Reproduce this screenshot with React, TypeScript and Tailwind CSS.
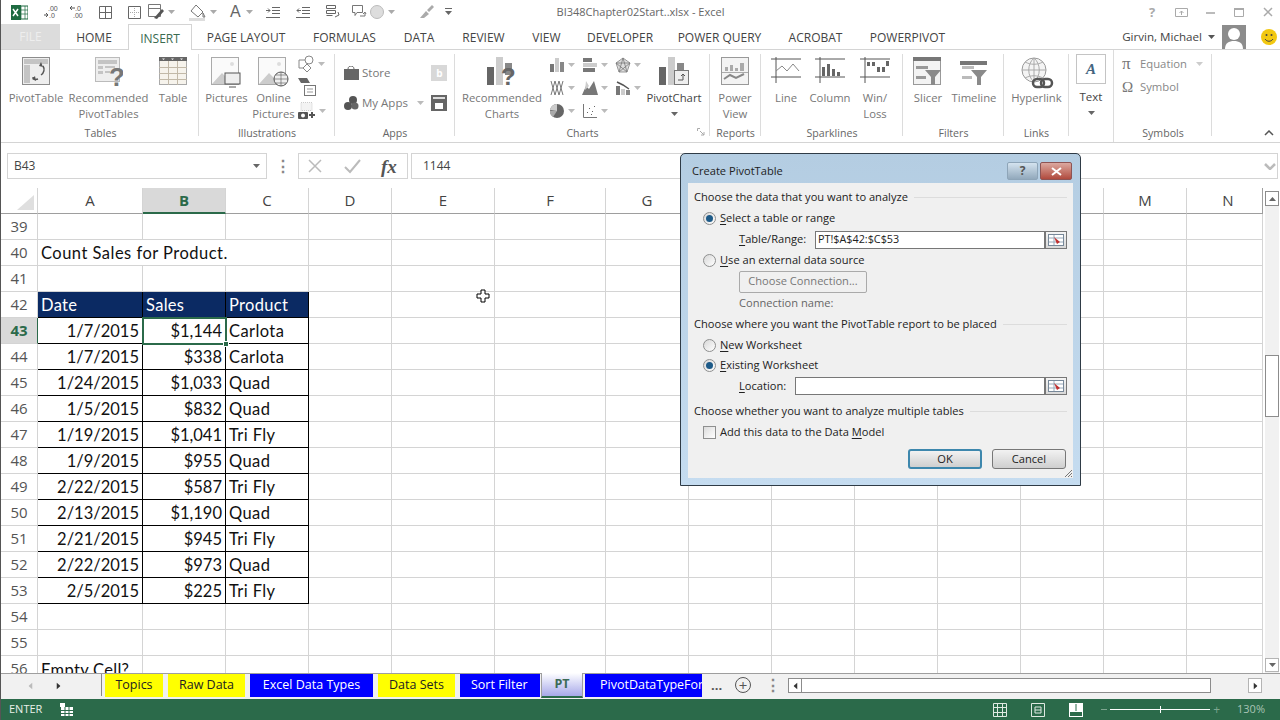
import type { ReactNode } from "react";

const UI = "font-['Open_Sans',sans-serif]";

const CELLS: [number, string, string, string][] = [
  [43, "1/7/2015", "$1,144", "Carlota"],
  [44, "1/7/2015", "$338", "Carlota"],
  [45, "1/24/2015", "$1,033", "Quad"],
  [46, "1/5/2015", "$832", "Quad"],
  [47, "1/19/2015", "$1,041", "Tri Fly"],
  [48, "1/9/2015", "$955", "Quad"],
  [49, "2/22/2015", "$587", "Tri Fly"],
  [50, "2/13/2015", "$1,190", "Quad"],
  [51, "2/21/2015", "$945", "Tri Fly"],
  [52, "2/22/2015", "$973", "Quad"],
  [53, "2/5/2015", "$225", "Tri Fly"],
];

const COLUMNS = [
  { name: "A", w: "w-[105px]" },
  { name: "B", w: "w-[83px]" },
  { name: "C", w: "w-[83px]" },
  { name: "D", w: "w-[83px]" },
  { name: "E", w: "w-[103px]" },
  { name: "F", w: "w-[111px]" },
  { name: "G", w: "w-[83px]" },
  { name: "H", w: "w-[83px]" },
  { name: "I", w: "w-[83px]" },
  { name: "J", w: "w-[83px]" },
  { name: "K", w: "w-[83px]" },
  { name: "L", w: "w-[83px]" },
  { name: "M", w: "w-[83px]" },
  { name: "N", w: "w-[76px] pl-[7px]" },
];

const TABS = [
  { label: "HOME", w: "w-[68px]" },
  { label: "INSERT", w: "w-[64px]", active: true },
  { label: "PAGE LAYOUT", w: "w-[108px]" },
  { label: "FORMULAS", w: "w-[89px]" },
  { label: "DATA", w: "w-[60px]" },
  { label: "REVIEW", w: "w-[69px]" },
  { label: "VIEW", w: "w-[57px]" },
  { label: "DEVELOPER", w: "w-[90px]" },
  { label: "POWER QUERY", w: "w-[109px]" },
  { label: "ACROBAT", w: "w-[83px]" },
  { label: "POWERPIVOT", w: "w-[101px]" },
];

const SHEETS = [
  { label: "Topics", w: "w-[58px]", c: "bg-[#ffff00] text-[#222] justify-center" },
  { label: "Raw Data", w: "w-[77px]", c: "bg-[#ffff00] text-[#222] justify-center" },
  { label: "Excel Data Types", w: "w-[123px]", c: "bg-[#0000ff] text-white justify-center" },
  { label: "Data Sets", w: "w-[77px]", c: "bg-[#ffff00] text-[#222] justify-center" },
  { label: "Sort Filter", w: "w-[80px]", c: "bg-[#0000ff] text-white pl-[11px]" },
];

function Caret({ className = "" }: { className?: string }) {
  return (
    <svg width="7" height="4" viewBox="0 0 7 4" className={className}>
      <path d="M0 0h7L3.5 4z" fill="currentColor" />
    </svg>
  );
}

function Large({ w, icon, lines, dark }: { w: string; icon: ReactNode; lines: string[]; dark?: boolean }) {
  return (
    <div className={`${w} flex shrink-0 flex-col items-center pt-[7px]`}>
      <div className="flex h-[33px] items-start justify-center">{icon}</div>
      <div className={`text-center text-[11.3px] leading-[16px] whitespace-nowrap ${dark ? "text-[#444]" : "text-[#777]"}`}>
        {lines.map((l) => (
          <div key={l}>{l}</div>
        ))}
      </div>
    </div>
  );
}

function Group({ w, label, children, noLine }: { w: string; label?: string; children: ReactNode; noLine?: boolean }) {
  return (
    <div className={`${w} relative flex h-full shrink-0 flex-col`}>
      <div className="flex h-[75px] items-start">{children}</div>
      <div className="text-center text-[10.6px] leading-[16px] text-[#666]">{label}</div>
      {!noLine && <div className="absolute top-[4px] right-0 bottom-[6px] w-px bg-[#dcdcdc]" />}
    </div>
  );
}

/* ribbon icons, all greyed out because the dialog is open */
function PivotIcon() {
  return (
    <svg width="28" height="28" viewBox="0 0 28 28">
      <rect x=".5" y=".5" width="27" height="27" fill="#eee" stroke="#8c8c8c" />
      <path d="M2 2h24v5H2zM2 8h6v18H2z" fill="#c4c4c4" />
      <path d="M11 20c0 2 2 3 5 2M21 9c2 3 1 7-2 9" fill="none" stroke="#555" strokeWidth="1.5" />
      <path d="M19 5l-2 4 4 1zM13 19l-3 3 4 2z" fill="#555" />
    </svg>
  );
}
function RecPivotIcon() {
  return (
    <svg width="28" height="30" viewBox="0 0 28 30">
      <rect x=".5" y=".5" width="24" height="24" fill="#eee" stroke="#bbb" />
      <path d="M3 3h19v4H3zM3 9h5v3H3zM3 14h5v3H3zM10 9h10v2H10zM10 14h5v2H10z" fill="#c4c4c4" />
      <text x="14" y="29" fontSize="26" fontWeight="700" fill="#777" fontFamily="Liberation Sans">?</text>
    </svg>
  );
}
function TableIcon() {
  return (
    <svg width="28" height="28" viewBox="0 0 28 28">
      <rect x=".5" y=".5" width="27" height="27" fill="#f6f3ec" stroke="#aaa" />
      <rect width="28" height="4" fill="#666" />
      <path d="M9.5 4v24M18.5 4v24M0 10.5h28M0 16.5h28M0 22.5h28" stroke="#c2b9a8" fill="none" />
      <path d="M3 1.5h3L4.500 3zM12 1.500h3L13.500 3zM21 1.500h3L22.500 3z" fill="#eee" />
    </svg>
  );
}
function PictureBase({ children }: { children: ReactNode }) {
  return (
    <svg width="31" height="31" viewBox="0 0 31 31">
      <rect x=".5" y=".5" width="27" height="27" fill="#fafafa" stroke="#aaa" />
      <path d="M1 27l10-11 6 6 3-2 7 7z" fill="#ccc" />
      <circle cx="21" cy="7" r="2" fill="#ddd" />
      {children}
    </svg>
  );
}
function LineChartSpark({ children }: { children: ReactNode }) {
  return (
    <svg width="30" height="28" viewBox="0 0 30 28">
      <path d="M0 2h30M0 20h30M5 0v26" stroke="#555" fill="none" />
      {children}
    </svg>
  );
}
function BarsIcon({ question, pivot }: { question?: boolean; pivot?: boolean }) {
  return (
    <svg width="30" height="30" viewBox="0 0 30 30">
      <rect x="0" y="10" width="7" height="18" fill="#666" />
      <rect x="9" y="0" width="7" height="28" fill="#ccc" />
      <rect x="18" y="6" width="7" height="12" fill="#888" />
      {question && <text x="14" y="28" fontSize="24" fontWeight="700" fill="#666" fontFamily="Liberation Sans">?</text>}
      {pivot && (
        <>
          <rect x="15.500" y="13.500" width="14" height="14" fill="#eee" stroke="#777" />
          <path d="M19 23h5v-5m-2 1l2-2 2 2" fill="none" stroke="#555" />
        </>
      )}
    </svg>
  );
}
function FunnelIcon({ framed }: { framed?: boolean }) {
  return (
    <svg width="30" height="28" viewBox="0 0 30 28">
      {framed && <rect x=".5" y=".5" width="27" height="27" fill="#f3f3f3" stroke="#999" />}
      <rect x={framed ? 0 : 1} y={framed ? 0 : 4} width={framed ? 28 : 27} height="4" fill="#777" />
      <path d="M3 9h12v3H3zM3 19h10v3H3z" fill={framed ? "#999" : "#bbb"} />
      <path d="M12 13h16l-6 7v8h-4v-8z" fill="#8a8a8a" />
    </svg>
  );
}
function SmallChart({ children }: { children: ReactNode }) {
  return (
    <div className="flex h-[23px] w-[33px] items-center gap-[3px] text-[#bbb]">
      <svg width="16" height="16" viewBox="0 0 16 16">{children}</svg>
      <Caret />
    </div>
  );
}

function Ribbon() {
  return (
    <div className="flex h-[93px] shrink-0 border-b border-[#d4d4d4] bg-white pl-px">
      <Group w="w-[197px]" label="Tables">
        <Large w="w-[68px]" icon={<PivotIcon />} lines={["PivotTable"]} />
        <Large w="w-[77px]" icon={<RecPivotIcon />} lines={["Recommended", "PivotTables"]} />
        <Large w="w-[52px]" icon={<TableIcon />} lines={["Table"]} />
      </Group>
      <Group w="w-[136px]" label="Illustrations">
        <Large w="w-[55px]" icon={<PictureBase><rect x="14" y="16" width="15" height="11" fill="#eee" stroke="#555" /><path d="M18 30h7" stroke="#555" /></PictureBase>} lines={["Pictures"]} />
        <Large w="w-[39px]" icon={<PictureBase><circle cx="23" cy="22" r="7" fill="#eee" stroke="#555" /><path d="M16 22h14M23 15v14M18 18h10M18 26h10" stroke="#555" fill="none" strokeWidth=".6" /></PictureBase>} lines={["Online", "Pictures"]} />
        <div className="ml-[5px] flex flex-col gap-[5px] pt-[5px] text-[#bbb]">
          <div className="flex items-center gap-[3px]">
            <svg width="17" height="18" viewBox="0 0 17 18"><path d="M1 5h8v8H1z" fill="none" stroke="#888" /><circle cx="11" cy="5" r="4" fill="#fff" stroke="#888" /><path d="M9 9l4 4-4 4-4-4z" fill="#fff" stroke="#888" /></svg>
            <Caret />
          </div>
          <svg width="18" height="19" viewBox="0 0 18 19"><path d="M0 0h9l3 5H3z" fill="#666" /><rect x="6.500" y="7.500" width="11" height="10" fill="#fff" stroke="#777" /><path d="M9 11h6M9 14h6" stroke="#999" /></svg>
          <div className="flex items-center gap-[3px]">
            <svg width="18" height="18" viewBox="0 0 18 18"><rect x="3" y=".5" width="11" height="8" fill="#f3f3f3" stroke="#ccc" strokeDasharray="1 1" /><rect x="0" y="10" width="10" height="7" rx="1" fill="#555" /><circle cx="5" cy="13.500" r="2" fill="#fff" /><path d="M14 10v6M11 13h6" stroke="#555" strokeWidth="2" /></svg>
            <Caret />
          </div>
        </div>
      </Group>
      <Group w="w-[120px]" label="Apps">
        <div className="flex w-full flex-col gap-[12px] pt-[14px] pl-[9px] text-[11.5px] leading-[18px] text-[#777]">
          <div className="flex items-center">
            <svg width="15" height="14" viewBox="0 0 15 14" className="mr-[3px]"><path d="M0 3h15v11H0z" fill="#666" /><path d="M4 3c0-4 6-4 6 0" fill="none" stroke="#666" /></svg>
            <span>Store</span>
            <div className="ml-[41px] flex h-[16px] w-[16px] items-center justify-center bg-[#d8d8d8] text-[10px] font-bold text-white">b</div>
          </div>
          <div className="flex items-center">
            <svg width="15" height="14" viewBox="0 0 15 14" className="mr-[3px]"><circle cx="9" cy="4" r="4" fill="#555" /><circle cx="4" cy="10" r="4" fill="#555" /><circle cx="11" cy="10" r="3.500" fill="#666" /></svg>
            <span>My Apps</span>
            <Caret className="ml-[9px] text-[#bbb]" />
            <svg width="16" height="16" viewBox="0 0 16 16" className="ml-[7px]"><rect width="16" height="16" fill="#666" /><rect x="2" y="2" width="12" height="2" fill="#ddd" /><rect x="4" y="8" width="8" height="6" fill="#fff" /></svg>
          </div>
        </div>
      </Group>
      <Group w="w-[255px]" label="Charts">
        <Large w="w-[94px]" icon={<BarsIcon question />} lines={["Recommended", "Charts"]} />
        <div className="flex shrink-0 flex-col pt-[3px]">
          <div className="flex">
            <SmallChart><rect x="1" y="7" width="4" height="8" fill="#777" /><rect x="6" y="1" width="4" height="14" fill="#ccc" /><rect x="11" y="5" width="4" height="10" fill="#888" /></SmallChart>
            <SmallChart><rect x="1" y="1" width="9" height="4" fill="#777" /><rect x="1" y="6" width="14" height="4" fill="#ccc" /><rect x="1" y="11" width="12" height="4" fill="#777" /></SmallChart>
            <SmallChart><path d="M8 1l7 5-3 9H4L1 6z" fill="#ddd" stroke="#999" /><path d="M8 1l4 14M8 1L4 15M1 6l11 9M15 6L4 15M1 6h14" stroke="#777" fill="none" strokeWidth=".8" /></SmallChart>
          </div>
          <div className="flex">
            <SmallChart><path d="M2 1l4 14 4-14 4 14M2 15l4-14 4 14 4-14" fill="none" stroke="#777" /></SmallChart>
            <SmallChart><path d="M0 15l4-9 3 3 5-8 4 14z" fill="#777" /><path d="M4 1l3 5-4 4z" fill="#ccc" /></SmallChart>
            <SmallChart><rect x="1" y="6" width="4" height="9" fill="#777" /><rect x="6" y="9" width="4" height="6" fill="#ccc" /><rect x="11" y="10" width="4" height="5" fill="#888" /><path d="M2 2l6 3 6 4" fill="none" stroke="#555" strokeWidth="1.500" /></SmallChart>
          </div>
          <div className="flex">
            <SmallChart><circle cx="8" cy="8" r="7" fill="#666" /><path d="M8 8V1A7 7 0 0 0 1 7z" fill="#ccc" /><path d="M8 8L1 8a7 7 0 0 0 3 6z" fill="#aaa" /></SmallChart>
            <SmallChart><path d="M1.500 1v13.500H15" fill="none" stroke="#777" /><path d="M5 9h1v1H5zM7 5h1v1H7zM10 8h1v1h-1zM12 3h1v1h-1zM9 11h1v1H9z" fill="#666" /></SmallChart>
          </div>
        </div>
        <div className="relative ml-[-5px] flex w-[62px] shrink-0 flex-col items-center pt-[7px]">
          <div className="h-[33px]"><BarsIcon pivot /></div>
          <div className="text-[11.3px] leading-[16px] text-[#444]">PivotChart</div>
          <Caret className="mt-[6px] text-[#666]" />
        </div>
        <svg width="8" height="8" viewBox="0 0 8 8" className="absolute right-[5px] bottom-[6px]"><path d="M.5 3V.5H3M3 3l4 4M7 4v3H4" fill="none" stroke="#aaa" /></svg>
      </Group>
      <Group w="w-[51px]" label="Reports">
        <Large
          w="w-[50px]"
          icon={
            <svg width="28" height="28" viewBox="0 0 28 28">
              <rect x=".5" y=".5" width="27" height="27" fill="#f3f3f3" stroke="#999" />
              <path d="M4 10h3v4H4zM9 8h3v6H9zM14 11h3v3h-3zM19 6h4v8h-4z" fill="#aaa" />
              <path d="M3 22l6-4 6 3 8-4" fill="none" stroke="#888" strokeWidth="2" />
              <path d="M1 15.500h26" stroke="#aaa" />
            </svg>
          }
          lines={["Power", "View"]}
        />
      </Group>
      <Group w="w-[142px]" label="Sparklines">
        <Large w="w-[50px]" icon={<LineChartSpark><path d="M5 14l6-5 5 5 6-7 6 7" fill="none" stroke="#888" /></LineChartSpark>} lines={["Line"]} />
        <Large w="w-[38px]" icon={<LineChartSpark><path d="M7 10h3v9H7zM12 7h3v12h-3zM17 12h3v7h-3zM22 15h3v4h-3z" fill="#666" /></LineChartSpark>} lines={["Column"]} />
        <Large w="w-[52px]" icon={<LineChartSpark><path d="M7 5h3v4H7zM12 5h3v4h-3zM17 10h3v5h-3zM22 10h3v5h-3zM26 4h3v5h-3z" fill="#666" /></LineChartSpark>} lines={["Win/", "Loss"]} />
      </Group>
      <Group w="w-[101px]" label="Filters">
        <Large w="w-[50px]" icon={<FunnelIcon framed />} lines={["Slicer"]} />
        <Large w="w-[42px]" icon={<FunnelIcon />} lines={["Timeline"]} />
      </Group>
      <Group w="w-[65px]" label="Links">
        <Large
          w="w-[65px]"
          icon={
            <svg width="34" height="32" viewBox="0 0 34 32">
              <circle cx="14" cy="13" r="12" fill="#f4f4f4" stroke="#999" />
              <path d="M2 13h24M14 1v24M5 5c6 3 12 3 18 0M5 21c6-3 12-3 18 0M14 1c-7 6-7 18 0 24M14 1c7 6 7 18 0 24" fill="none" stroke="#aaa" />
              <rect x="13" y="22" width="11" height="8" rx="4" fill="none" stroke="#555" strokeWidth="2.500" />
              <rect x="21" y="22" width="11" height="8" rx="4" fill="none" stroke="#555" strokeWidth="2.500" />
            </svg>
          }
          lines={["Hyperlink"]}
        />
      </Group>
      <Group w="w-[44px]" noLine>
        <div className="flex w-full flex-col items-center pt-[4px] text-[#444]">
          <div className="flex h-[30px] w-[30px] items-center justify-center border border-[#c4c4c4] font-['Liberation_Serif',serif] text-[15px] font-bold text-[#44647f] italic">A</div>
          <div className="mt-[5px] text-[11.5px] leading-[16px]">Text</div>
          <Caret className="mt-[6px] text-[#666]" />
        </div>
      </Group>
      <div className="h-full w-px bg-[#dcdcdc]" />
      <Group w="w-[98px]" label="Symbols">
        <div className="flex w-full flex-col gap-[5px] pt-[5px] pl-[8px] text-[11.3px] leading-[18px] text-[#888]">
          <div className="flex items-center">
            <span className="w-[18px] font-['Liberation_Serif',serif] text-[17px] leading-[18px] text-[#777]">π</span>
            <span>Equation</span>
            <Caret className="ml-[9px] text-[#ccc]" />
          </div>
          <div className="flex items-center">
            <span className="w-[18px] font-['Liberation_Serif',serif] text-[15px] leading-[18px] text-[#777]">Ω</span>
            <span>Symbol</span>
          </div>
        </div>
      </Group>
      <div className="flex flex-1 items-end justify-end pr-[6px] pb-[6px]">
        <svg width="10" height="6" viewBox="0 0 10 6"><path d="M1 5l4-4 4 4" fill="none" stroke="#555" strokeWidth="1.500" /></svg>
      </div>
    </div>
  );
}

function TitleBar() {
  return (
    <div className="grid h-[24px] shrink-0 grid-cols-[1fr_auto_1fr] items-center bg-white">
      <div className="flex items-center pl-[10px] text-[#aaa]">
        <svg width="17" height="17" viewBox="0 0 17 17"><rect x="7" y="2" width="10" height="13" fill="#fff" stroke="#1e6b41" /><path d="M10 2v13M14 2v13M7 6h10M7 10h10" stroke="#1e6b41" strokeWidth=".7" /><rect y="1" width="10" height="15" fill="#1e6b41" /><path d="M2 5l5 7M7 5l-5 7" stroke="#fff" strokeWidth="1.500" /></svg>
        <svg width="16" height="14" viewBox="0 0 16 14" className="ml-[16px]"><text x="4" y="6" fontSize="7" fill="#555" fontFamily="Liberation Sans">.00</text><text x="5" y="13" fontSize="7" fill="#555" fontFamily="Liberation Sans">.0</text><path d="M0 10h4m-2-2l2 2-2 2" fill="none" stroke="#555" /></svg>
        <svg width="16" height="14" viewBox="0 0 16 14" className="ml-[10px]"><text x="5" y="6" fontSize="7" fill="#555" fontFamily="Liberation Sans">.0</text><text x="3" y="13" fontSize="7" fill="#555" fontFamily="Liberation Sans">.00</text><path d="M5 3H0m2-2L0 3l2 2" fill="none" stroke="#555" /></svg>
        <svg width="13" height="13" viewBox="0 0 13 13" className="ml-[13px]"><path d="M.5.500h12v12H.500zM6.500.500v12M.5 6.500h12" fill="none" stroke="#666" /></svg>
        <svg width="13" height="13" viewBox="0 0 13 13" className="ml-[16px]"><path d="M.5.500h12v12H.500z" fill="none" stroke="#666" /><path d="M6.500 2v9M2 6.500h9" stroke="#aaa" strokeDasharray="1 1" /></svg>
        <svg width="17" height="16" viewBox="0 0 17 16" className="ml-[7px]"><path d="M.5.500h12v12H.500zM.5 4.500h12" fill="none" stroke="#777" /><path d="M6 14l8-9 2 2-7 8z" fill="#555" /></svg>
        <Caret className="ml-[3px]" />
        <svg width="18" height="17" viewBox="0 0 18 17" className="ml-[14px]"><path d="M7 1l7 7-5 5-7-6zM14 9l2 4-2 0z" fill="#fff" stroke="#777" /><rect y="14" width="16" height="3" fill="#ddd" /></svg>
        <Caret className="ml-[3px]" />
        <span className="ml-[13px] font-['Liberation_Sans',sans-serif] text-[16px] leading-none text-[#666]">A</span>
        <Caret className="ml-[5px]" />
        <svg width="14" height="11" viewBox="0 0 14 11" className="ml-[13px]"><path d="M6 .5h8M6 3.500h8M6 6.500h8M0 10.500h14M0 3.500h4m-2-2l2 2-2 2" fill="none" stroke="#666" /></svg>
        <svg width="14" height="11" viewBox="0 0 14 11" className="ml-[16px]"><path d="M6 .5h8M6 3.500h8M6 6.500h8M0 10.500h14M5 3.500H1m2-2l-2 2 2 2" fill="none" stroke="#666" /></svg>
        <svg width="14" height="14" viewBox="0 0 14 14" className="ml-[16px]"><path d="M.5.500h9v3h-9zM.5 5.500h9v3h-9zM.5 10.500h6M9 12l4-2-1-3" fill="none" stroke="#666" /></svg>
        <svg width="15" height="14" viewBox="0 0 15 14" className="ml-[12px]"><path d="M.5.500h10v7H5l-2 3v-3H.5zM8 11h5v-3m-2 1l2-2 1 2" fill="none" stroke="#777" /></svg>
        <div className="ml-[3px] h-[14px] w-[14px] rounded-full border border-[#bbb] bg-[#ddd]" />
        <Caret className="ml-[4px]" />
        <svg width="14" height="14" viewBox="0 0 14 14" className="ml-[25px]"><path d="M0 13l6-7 3 3-5 4zM7 5l5-5 2 2-5 5z" fill="#aaa" /></svg>
        <svg width="7" height="8" viewBox="0 0 7 8" className="ml-[11px]"><path d="M0 .5h7" stroke="#666" /><path d="M0 3h7L3.500 7z" fill="#666" /></svg>
      </div>
      <div className="text-[11px] text-[#666]">BI348Chapter02Start..xlsx - Excel</div>
      <div className="flex items-center justify-end gap-[15px] pr-[5px] text-[#bbb]">
        <div className="flex w-[14px] justify-center"><span className="text-[13px] leading-none font-bold text-[#aaa]">?</span></div>
        <div className="flex w-[14px] justify-center"><svg width="13" height="9" viewBox="0 0 13 9"><path d="M.5.500h12v8H.500zM6.500 7V3M4.500 5l2-2 2 2" fill="none" stroke="#aaa" /></svg></div>
        <div className="flex w-[14px] justify-center"><svg width="9" height="3" viewBox="0 0 9 3"><rect width="9" height="2" y="1" fill="#bbb" /></svg></div>
        <div className="flex w-[14px] justify-center"><svg width="10" height="9" viewBox="0 0 10 9"><path d="M.5.500h9v8h-9z" fill="none" stroke="#aaa" /><path d="M0 1h10" stroke="#aaa" strokeWidth="2" /></svg></div>
        <div className="flex w-[14px] justify-center"><svg width="10" height="10" viewBox="0 0 10 10"><path d="M1 1l8 8M9 1L1 9" stroke="#aaa" strokeWidth="1.500" /></svg></div>
      </div>
    </div>
  );
}

function TabsRow() {
  return (
    <div className="flex h-[26px] shrink-0 items-stretch border-b border-[#d4d4d4] bg-white text-[12px] text-[#444]">
      <div className="flex w-[59px] items-center justify-center bg-[#dcdcdc] pt-px text-[#eee]">FILE</div>
      {TABS.map((t) => (
        <div
          key={t.label}
          className={`${t.w} -mb-px flex items-center justify-center pt-[2px] ${t.active ? "border border-b-0 border-[#d4d4d4] bg-white text-[#3b6b50]" : ""}`}
        >
          {t.label}
        </div>
      ))}
      <div className="flex flex-1 items-center justify-end">
        <span className="pt-px text-[11.6px]">Girvin, Michael</span>
        <Caret className="ml-[6px] text-[#555]" />
        <svg width="24" height="24" viewBox="0 0 24 24" className="mt-px ml-[7px]">
          <rect width="24" height="24" fill="#8c8c8c" />
          <circle cx="12" cy="9" r="6" fill="#fff" />
          <path d="M3 24c0-6 4-8 9-8s9 2 9 8z" fill="#fff" />
        </svg>
        <div className="mr-[3px] ml-[15px] flex h-[16px] w-[16px] items-center justify-center rounded-full bg-[#f2c811]">
          <svg width="16" height="16" viewBox="0 0 16 16"><circle cx="5.500" cy="6" r="1" fill="#444" /><circle cx="10.500" cy="6" r="1" fill="#444" /><path d="M4 10c2 3 6 3 8 0" fill="none" stroke="#444" /></svg>
        </div>
      </div>
    </div>
  );
}

function FormulaBar() {
  return (
    <div className="flex h-[35px] shrink-0 items-start bg-white pr-[2px] pl-[6px] text-[12px] text-[#444]">
      <div className="flex h-[26px] w-[260px] items-center justify-between border border-[#d4d4d4] px-[6px]">
        <span>B43</span>
        <Caret className="text-[#666]" />
      </div>
      <div className="flex h-[26px] w-[31px] items-center justify-center text-[16px] leading-none font-bold text-[#888]">⋮</div>
      <div className="flex h-[26px] w-[110px] items-center gap-[20px] border border-[#d4d4d4] pl-[8px]">
        <svg width="16" height="16" viewBox="0 0 16 16"><path d="M2 2l12 12M14 2L2 14" stroke="#bbb" strokeWidth="1.500" /></svg>
        <svg width="18" height="16" viewBox="0 0 18 16"><path d="M2 9l5 5L17 2" stroke="#bbb" strokeWidth="2" fill="none" /></svg>
        <span className="font-['Liberation_Serif',serif] text-[19px] leading-none font-bold text-[#555] italic">fx</span>
      </div>
      <div className="ml-[3px] flex h-[26px] flex-1 items-center justify-between border border-[#d4d4d4] pr-[1px] pl-[11px]">
        <span>1144</span>
        <svg width="12" height="7" viewBox="0 0 12 7"><path d="M1 1l5 5 5-5" fill="none" stroke="#bbb" strokeWidth="2.500" /></svg>
      </div>
    </div>
  );
}

function ColumnHeaders() {
  return (
    <div className="flex h-[26px] shrink-0 bg-white">
      <div className="relative w-[37px] border-r border-b border-r-[#d4d4d4] border-b-[#9e9e9e]">
        <svg width="17" height="15" viewBox="0 0 17 15" className="absolute right-[3px] bottom-[3px]"><path d="M17 0v15H0z" fill="#dfdfdf" /></svg>
      </div>
      {COLUMNS.map((c) => (
        <div
          key={c.name}
          className={`${c.w} flex items-center justify-center border-b font-['Open_Sans',sans-serif] text-[15px] ${c.name === "B" ? "border-r border-r-[#d4d4d4] border-b-2 border-b-[#2b6a4a] bg-[#d9d9d9] font-bold text-[#2b6a4a]" : c.name === "N" ? "border-r border-r-[#9e9e9e] border-b-[#9e9e9e] text-[#444]" : "border-r border-r-[#d4d4d4] border-b-[#9e9e9e] text-[#444]"}`}
        >
          {c.name}
        </div>
      ))}
      <div className="ml-[2px] flex w-[14px] flex-col pt-[3px]">
        <div className="flex h-[15px] items-center justify-center border border-[#8c8c8c] bg-white">
          <Caret className="rotate-180 text-[#666]" />
        </div>
        <div className="flex-1 bg-[#f1f1f1]" />
      </div>
    </div>
  );
}

function Scrollbar() {
  return (
    <div className="ml-[2px] flex h-full w-[14px] shrink-0 flex-col bg-[#f1f1f1] pb-px">
      <div className="mt-[141px] h-[62px] border border-[#8c8c8c] bg-white" />
      <div className="flex-1" />
      <div className="flex h-[14px] items-center justify-center border border-[#b4b4b4] bg-white">
        <Caret className="text-[#666]" />
      </div>
    </div>
  );
}

function Cell({ w, children, className = "" }: { w: string; children?: ReactNode; className?: string }) {
  return <div className={`${w} flex h-full shrink-0 items-center overflow-visible pt-[2px] whitespace-nowrap ${className}`}>{children}</div>;
}

function Row({ n, active, children }: { n: number; active?: boolean; children?: ReactNode }) {
  return (
    <div className="flex h-[26px] shrink-0">
      <div
        className={`flex w-[37px] shrink-0 items-center justify-center border-r border-b font-['Open_Sans',sans-serif] text-[15px] ${active ? "border-r-[#2b6a4a] border-b-[#d4d4d4] bg-[#d9d9d9] font-bold text-[#2b6a4a]" : "border-[#d4d4d4] text-[#555]"}`}
      >
        {n}
      </div>
      {children}
    </div>
  );
}

function GridLines({ from = 0 }: { from?: number }) {
  return (
    <>
      {COLUMNS.slice(from).map((c) => (
        <Cell key={c.name} w={c.w.split(" ")[0]} className="border-r border-b border-[#d4d4d4]" />
      ))}
    </>
  );
}

function Sheet() {
  const blank = (n: number) => (
    <Row key={n} n={n}>
      <GridLines />
    </Row>
  );
  const black = "border-r border-b border-black px-[3px]";
  const head = "border-r border-b border-black bg-[#0b2a63] px-[3px] text-white tracking-[0.3px]";
  return (
    <div className="flex min-h-0 flex-1 overflow-hidden bg-white">
      <div className="relative w-[1262px] shrink-0 font-['Lato',sans-serif] text-[16.5px] text-[#111]">
        {blank(39)}
        <Row n={40}>
          <Cell w="w-[271px]" className="border-r border-b border-[#d4d4d4] px-[3px] tracking-[0.48px]">Count Sales for Product.</Cell>
          <GridLines from={3} />
        </Row>
        {blank(41)}
        <Row n={42}>
          <Cell w="w-[105px]" className={head}>Date</Cell>
          <Cell w="w-[83px]" className={head}>Sales</Cell>
          <Cell w="w-[83px]" className={head}>Product</Cell>
          <GridLines from={3} />
        </Row>
        {CELLS.map(([n, date, sales, product]) => (
          <Row key={n} n={n} active={n === 43}>
            <Cell w="w-[105px]" className={`${black} justify-end`}>{date}</Cell>
            <Cell w="w-[83px]" className={`${black} justify-end`}>{sales}</Cell>
            <Cell w="w-[83px]" className={`${black} tracking-[0.4px]`}>{product}</Cell>
            <GridLines from={3} />
          </Row>
        ))}
        {blank(54)}
        {blank(55)}
        <Row n={56}>
          <Cell w="w-[105px]" className="border-r border-[#d4d4d4] px-[3px] pt-0 tracking-[0.3px]">Empty Cell?</Cell>
          <GridLines from={1} />
        </Row>
        {/* selection box around B43 */}
        <div className="pointer-events-none absolute top-[103px] left-[141px] h-[28px] w-[85px] border-2 border-[#2b6a4a]">
          <div className="absolute right-[-4px] bottom-[-4px] h-[6px] w-[6px] border border-white bg-[#2b6a4a]" />
        </div>
        {/* mouse pointer */}
        <svg width="14" height="14" viewBox="0 0 14 14" className="absolute top-[75px] left-[475px]">
          <path d="M5 1h4v4h4v4H9v4H5V9H1V5h4z" fill="#fff" stroke="#000" />
        </svg>
      </div>
      <Scrollbar />
    </div>
  );
}

function SheetTabs() {
  return (
    <div className="flex h-[26px] shrink-0 items-start border-t border-[#9e9e9e] bg-[#f1f1f1] pl-[26px] text-[12.5px]">
      <Caret className="mt-[10px] rotate-90 text-[#bbb]" />
      <Caret className="mt-[10px] ml-[21px] -rotate-90 text-[#333]" />
      <div className="ml-[39px] h-[22px] w-px bg-[#888]" />
      <div className="ml-[3px] flex h-[23px] gap-[5px]">
        {SHEETS.map((s) => (
          <div key={s.label} className={`${s.w} ${s.c} flex items-center whitespace-nowrap`}>{s.label}</div>
        ))}
      </div>
      <div className="-mt-px ml-px flex h-[25px] w-[42px] items-center justify-center border-x border-b-2 border-x-[#9e9e9e] border-b-[#2b6a4a] bg-gradient-to-b from-white to-[#a8a8e8] font-bold text-[#3d6b56]">PT</div>
      <div className="ml-[2px] flex h-[23px] w-[117px] items-center overflow-hidden bg-[#0000ff] pl-[15px] whitespace-nowrap text-white">PivotDataTypeFormula</div>
      <span className="ml-[9px] text-[13px] leading-[22px] font-bold text-[#555]">...</span>
      <div className="mt-[3px] ml-[13px] flex h-[16px] w-[16px] items-center justify-center rounded-full border border-[#555] text-[15px] leading-none text-[#555]">+</div>
      <span className="ml-[14px] text-[16px] leading-[22px] font-bold text-[#888]">⋮</span>
      <div className="mt-[4px] ml-[7px] flex h-[15px] w-[474px] items-stretch">
        <div className="flex w-[14px] items-center justify-center border border-[#8c8c8c] bg-white"><Caret className="rotate-90 text-[#333]" /></div>
        <div className="w-[409px] border-y border-r border-[#8c8c8c] bg-white" />
        <div className="flex-1" />
        <div className="flex w-[14px] items-center justify-center border border-[#b4b4b4] bg-white"><Caret className="-rotate-90 text-[#333]" /></div>
      </div>
    </div>
  );
}

function StatusBar() {
  return (
    <div className="flex h-[21px] shrink-0 items-center bg-[#2b6a4a] pr-[15px] pl-[8px] text-[11px] text-[#e8efe9]">
      <span>ENTER</span>
      <svg width="14" height="14" viewBox="0 0 14 14" className="ml-[18px]"><rect x="1" y="4" width="12" height="9" fill="#fff" /><path d="M1 7.500h12M5 4v9M9 4v9M1 10.500h12" stroke="#2b6a4a" /><rect x="0" y="0" width="5" height="4" fill="#fff" /></svg>
      <div className="flex-1" />
      <svg width="14" height="14" viewBox="0 0 14 14"><path d="M.5.500h13v13H.500zM4.500 1v12M9.500 1v12M1 4.500h12M1 9.500h12" fill="none" stroke="#dfe9e2" /></svg>
      <svg width="14" height="14" viewBox="0 0 14 14" className="ml-[24px]"><path d="M.5.500h13v13H.500zM4 4h6v6H4zM4 7h6" fill="none" stroke="#dfe9e2" /></svg>
      <svg width="14" height="14" viewBox="0 0 14 14" className="ml-[24px]"><rect width="14" height="14" fill="#fff" /><rect x="1" y="9" width="12" height="4" fill="#2b6a4a" /><path d="M7 1v7" stroke="#2b6a4a" /></svg>
      <span className="ml-[18px] h-px w-[6px] bg-[#7fa690]" />
      <div className="relative ml-[3px] h-px w-[100px] bg-white">
        <div className="absolute top-[-3px] left-[50px] h-[7px] w-px bg-white" />
      </div>
      <span className="ml-[3px] text-[12px] leading-none text-[#7fa690]">+</span>
      <span className="ml-[17px] text-[#a9c4b5]">130%</span>
    </div>
  );
}

function Radio({ on }: { on?: boolean }) {
  return (
    <div className="mr-[4px] flex h-[13px] w-[13px] shrink-0 items-center justify-center rounded-full border border-[#8e8f8f] bg-gradient-to-br from-[#d8d8d8] to-white">
      {on && <div className="h-[7px] w-[7px] rounded-full bg-[#1d5a88]" />}
    </div>
  );
}

function RefPicker() {
  return (
    <div className="flex h-[18px] w-[22px] items-center justify-center border border-[#777] bg-gradient-to-b from-[#f4f4f4] to-[#d8d8d8]">
      <svg width="16" height="12" viewBox="0 0 16 12"><rect x=".5" y=".5" width="15" height="11" fill="#fff" stroke="#789" /><path d="M1 4h14M1 8h14M6 1v10" stroke="#9ab" /><path d="M6 3l6 5-3 2z" fill="#c03030" /></svg>
    </div>
  );
}

function Section({ title, h }: { title: string; h: string }) {
  return (
    <div className={`${h} flex items-center pl-[6px]`}>
      <span>{title}</span>
      <div className="mr-[6px] ml-[6px] h-px flex-1 bg-[#dcdcdc]" />
    </div>
  );
}

function U({ children }: { children: string }) {
  return <span className="underline underline-offset-2">{children}</span>;
}

function Dialog() {
  return (
    <div className={`${UI} absolute top-[153px] left-[679px] flex h-[333px] w-[401px] flex-col rounded-t-[5px] border border-[#2f3b46] bg-gradient-to-b from-[#b4cde2] to-[#c5dcf0] px-[7px] pb-[7px] text-[11.1px] text-[#222]`}>
      <div className="flex h-[29px] shrink-0 items-center justify-between pt-[5px] pr-px pl-[4px] text-[11.1px]">
        <span>Create PivotTable</span>
        <div className="flex gap-[2px]">
          <div className="flex h-[18px] w-[31px] items-center justify-center rounded-[2px] border border-[#8ea5b8] bg-gradient-to-b from-[#d4e3ef] to-[#92a9bc] text-[12px] leading-none font-bold text-[#555]">?</div>
          <div className="flex h-[18px] w-[32px] items-center justify-center rounded-[2px] border border-[#8d5454] bg-gradient-to-b from-[#dba8a0] to-[#b04a3e]">
            <svg width="11" height="9" viewBox="0 0 11 9"><path d="M1 1l9 7M10 1L1 8" stroke="#fff" strokeWidth="2" /></svg>
          </div>
        </div>
      </div>
      <div className="relative flex min-h-0 flex-1 flex-col bg-[#f0f0f0] pt-[4px]">
        <Section h="h-[20px]" title="Choose the data that you want to analyze" />
        <div className="flex h-[22px] items-center pl-[15px]"><Radio on /><span><U>S</U>elect a table or range</span></div>
        <div className="flex h-[21px] items-center pl-[51px]">
          <span className="w-[76px]"><U>T</U>able/Range:</span>
          <div className="flex h-[18px] w-[230px] items-center border border-[#777] bg-white pl-[2px] text-[10.8px]">PT!$A$42:$C$53</div>
          <RefPicker />
        </div>
        <div className="flex h-[20px] items-center pl-[15px]"><Radio /><span><U>U</U>se an external data source</span></div>
        <div className="flex h-[23px] items-center pl-[51px]">
          <div className="flex h-[22px] w-[128px] items-center justify-center rounded-[2px] border border-[#aaa] text-[#777]">Choose Connection...</div>
        </div>
        <div className="flex h-[21px] items-center pl-[51px] text-[#666]">Connection name:</div>
        <Section h="h-[21px]" title="Choose where you want the PivotTable report to be placed" />
        <div className="flex h-[21px] items-center pl-[15px]"><Radio /><span><U>N</U>ew Worksheet</span></div>
        <div className="flex h-[19px] items-center pl-[15px]"><Radio on /><span><U>E</U>xisting Worksheet</span></div>
        <div className="flex h-[22px] items-center pl-[51px]">
          <span className="w-[56px]"><U>L</U>ocation:</span>
          <div className="h-[18px] w-[250px] border border-[#777] bg-white" />
          <RefPicker />
        </div>
        <div className="h-[4px]" />
        <Section h="h-[20px]" title="Choose whether you want to analyze multiple tables" />
        <div className="flex h-[22px] items-center pl-[15px]">
          <div className="mr-[4px] h-[13px] w-[13px] border border-[#8e8f8f] bg-gradient-to-br from-[#dcdcdc] to-white" />
          <span>Add this data to the Data <U>M</U>odel</span>
        </div>
        <div className="mt-[6px] flex justify-end gap-[10px] pr-[7px]">
          <div className="flex h-[20px] w-[74px] items-center justify-center rounded-[3px] border-2 border-[#3d87ad] bg-gradient-to-b from-[#f2f2f2] to-[#cfcfcf]">OK</div>
          <div className="flex h-[20px] w-[74px] items-center justify-center rounded-[3px] border border-[#777] bg-gradient-to-b from-[#f2f2f2] to-[#cfcfcf]">Cancel</div>
        </div>
        <svg width="10" height="10" viewBox="0 0 10 10" className="absolute right-0 bottom-0"><path d="M9 2L2 9M9 5L5 9M9 8L8 9" stroke="#777" /></svg>
      </div>
    </div>
  );
}

export default function App() {
  return (
    <div className={`${UI} relative flex h-[720px] w-[1280px] flex-col overflow-hidden border-l border-[#555] bg-white`}>
      <TitleBar />
      <TabsRow />
      <Ribbon />
      <div className="h-[10px] shrink-0 bg-white" />
      <FormulaBar />
      <ColumnHeaders />
      <Sheet />
      <SheetTabs />
      <StatusBar />
      <Dialog />
    </div>
  );
}
